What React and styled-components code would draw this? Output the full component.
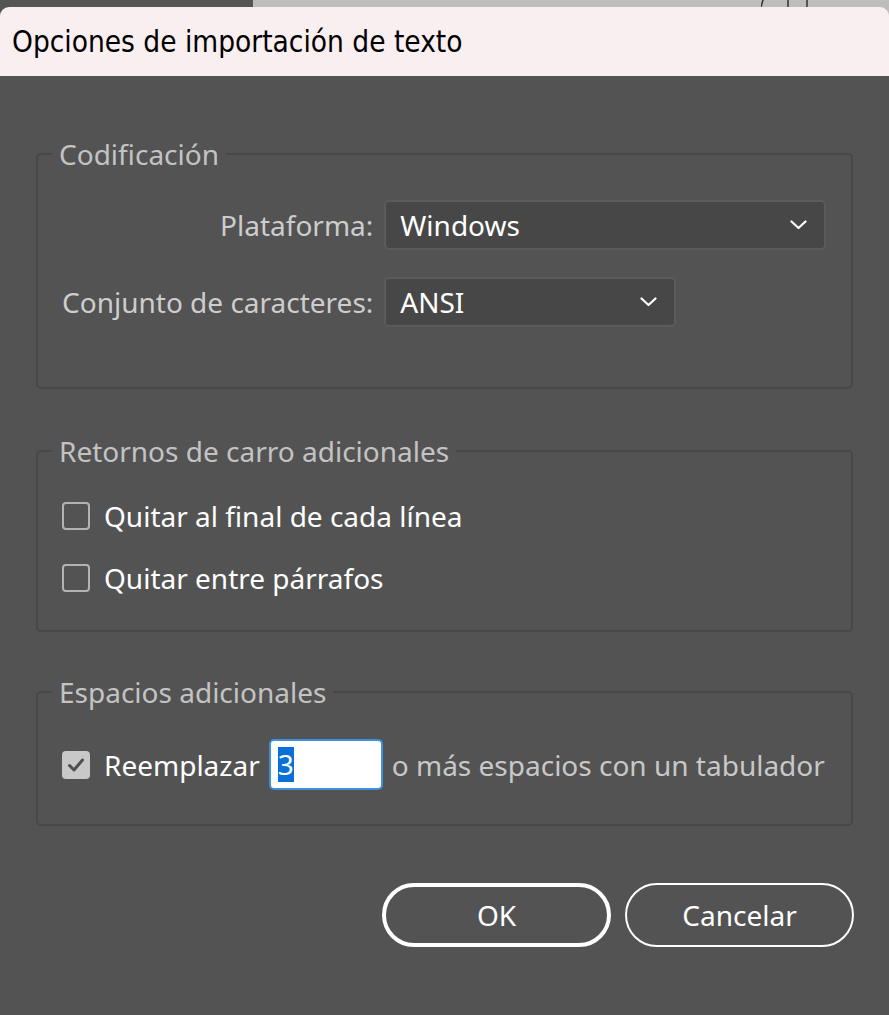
import React from 'react'
import styled, { createGlobalStyle } from 'styled-components'

const GlobalStyle = createGlobalStyle`
  html, body {
    margin: 0;
    padding: 0;
    background: #535353;
  }
  body {
    font-family: "Noto Sans", "Open Sans", sans-serif;
  }
`

const Screen = styled.div`
  width: 889px;
  height: 1015px;
  display: flex;
  flex-direction: column;
  overflow: hidden;
  background:
    linear-gradient(to right, #555555 253px, #bdbdbd 253px) top / 100% 18px no-repeat,
    #535353;
`

const Backdrop = styled.div`
  height: 7px;
  display: flex;
  justify-content: flex-end;
  padding-right: 76px;
`

const TitleBar = styled.div`
  height: 69px;
  display: flex;
  align-items: center;
  padding-left: 12px;
  background: #f9eef0;
  border-radius: 9px 9px 0 0;
  color: #000;
  font-family: "Liberation Sans Narrow", "DejaVu Sans Condensed", Roboto, sans-serif;
  font-size: 29.5px;
  font-stretch: condensed;
`

const Body = styled.div`
  flex: 1;
  display: flex;
  flex-direction: column;
  padding: 62px 36px 0;
  background: #535353;
`

const Group = styled.fieldset`
  margin: ${p => p.$top || 0}px 0 0;
  min-width: 0;
  border: 2px solid #484848;
  border-radius: 5px;
  padding: ${p => p.$pt}px 25px ${p => p.$pb}px 24px;
`

const Legend = styled.legend`
  margin-left: -10px;
  padding: 0 7px;
  font-size: 28px;
  line-height: 32px;
  color: #c3c3c3;
`

const FieldGrid = styled.div`
  display: grid;
  grid-template-columns: auto 1fr;
  column-gap: 11px;
  row-gap: 27px;
  align-items: center;
`

const FieldLabel = styled.span`
  justify-self: end;
  font-size: 28px;
  color: #cdcdcd;
`

const Select = styled.div`
  box-sizing: border-box;
  width: ${p => p.$width || '100%'};
  height: 50px;
  display: flex;
  align-items: center;
  justify-content: space-between;
  padding: 0 17px 0 14px;
  background: #474747;
  border: 2px solid #5b5b5b;
  border-radius: 5px;
  color: #fff;
  font-size: 28px;
`

const CheckList = styled.div`
  display: flex;
  flex-direction: column;
  gap: 22px;
`

const CheckRow = styled.label`
  height: ${p => p.$height || 40}px;
  display: flex;
  align-items: center;
  gap: 14px;
  color: #fff;
  font-size: 28px;
`

const Box = styled.span`
  box-sizing: border-box;
  width: 28px;
  height: 28px;
  flex: none;
  display: flex;
  align-items: center;
  justify-content: center;
  border: 2px solid ${p => (p.$checked ? '#c8c8c8' : '#b3b3b3')};
  border-radius: 4px;
  background: ${p => (p.$checked ? '#c8c8c8' : 'transparent')};
`

const SpinInput = styled.div`
  box-sizing: border-box;
  width: 114px;
  height: 51px;
  margin: 0 -5px;
  display: flex;
  align-items: center;
  padding-left: 7px;
  background: #fff;
  border: 2px solid #3d8fe0;
  border-radius: 5px;
`

const Selected = styled.span`
  background: #0a6fd6;
  color: #fff;
  font-size: 28px;
  line-height: 35px;
`

const Muted = styled.span`
  color: #c8c8c8;
`

const ButtonRow = styled.div`
  display: flex;
  justify-content: flex-end;
  gap: 14px;
  margin: 57px -1px 0 0;
`

const Button = styled.button`
  box-sizing: border-box;
  width: 229px;
  height: 64px;
  border: ${p => (p.$primary ? 4 : 2)}px solid #fff;
  border-radius: 32px;
  background: transparent;
  color: #fff;
  font-family: inherit;
  font-size: 28px;
`

const Chevron = () => (
  <svg width="17" height="10" viewBox="0 0 17 10">
    <polyline points="1.5,1.5 8.5,8 15.5,1.5" fill="none" stroke="#fff" strokeWidth="2.2" strokeLinecap="round" strokeLinejoin="round" />
  </svg>
)

const Check = ({ checked }) => (
  <Box $checked={checked}>
    {checked && (
      <svg width="18" height="16" viewBox="0 0 18 16">
        <polyline points="2.5,8.5 7,13 15.5,3" fill="none" stroke="#4e4e4e" strokeWidth="3" strokeLinecap="round" strokeLinejoin="round" />
      </svg>
    )}
  </Box>
)

const Marks = () => (
  <svg width="52" height="7" viewBox="0 0 52 7">
    <path d="M0 7 L2 0" stroke="#333" strokeWidth="1.5" />
    <path d="M27 0 V7" stroke="#333" strokeWidth="1.5" />
    <path d="M46 0 V7" stroke="#333" strokeWidth="1.5" />
  </svg>
)

const App = () => (
  <>
    <GlobalStyle />
    <Screen>
      <Backdrop>
        <Marks />
      </Backdrop>
      <TitleBar>Opciones de importación de texto</TitleBar>
      <Body>
        <Group $pt={30} $pb={60}>
          <Legend>Codificación</Legend>
          <FieldGrid>
            <FieldLabel>Plataforma:</FieldLabel>
            <Select>
              Windows
              <Chevron />
            </Select>
            <FieldLabel>Conjunto de caracteres:</FieldLabel>
            <Select $width="292px">
              ANSI
              <Chevron />
            </Select>
          </FieldGrid>
        </Group>

        <Group $top={46} $pt={29} $pb={32}>
          <Legend>Retornos de carro adicionales</Legend>
          <CheckList>
            <CheckRow>
              <Check />
              Quitar al final de cada línea
            </CheckRow>
            <CheckRow>
              <Check />
              Quitar entre párrafos
            </CheckRow>
          </CheckList>
        </Group>

        <Group $top={44} $pt={31} $pb={34}>
          <Legend>Espacios adicionales</Legend>
          <CheckRow as="div" $height={51}>
            <Check checked />
            Reemplazar
            <SpinInput>
              <Selected>3</Selected>
            </SpinInput>
            <Muted>o más espacios con un tabulador</Muted>
          </CheckRow>
        </Group>

        <ButtonRow>
          <Button $primary>OK</Button>
          <Button>Cancelar</Button>
        </ButtonRow>
      </Body>
    </Screen>
  </>
)

export default App
